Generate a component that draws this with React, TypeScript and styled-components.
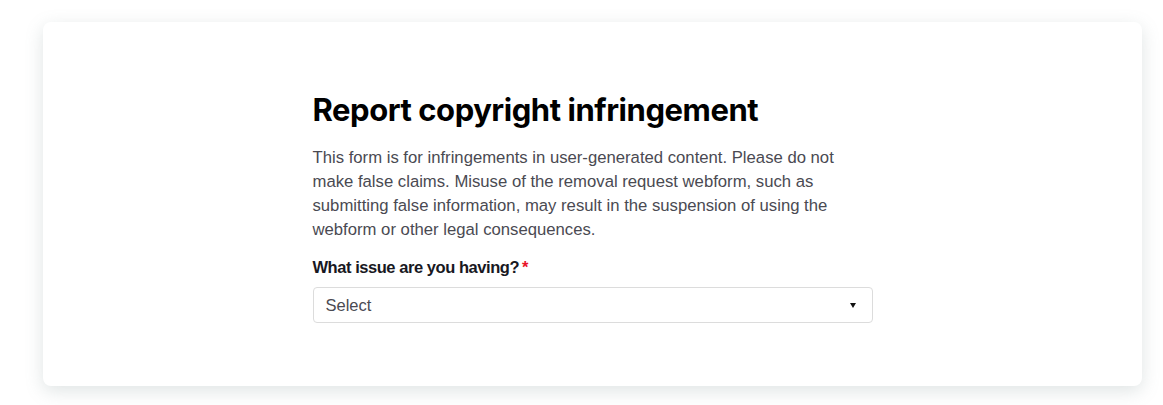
import styled, { createGlobalStyle } from "styled-components";

const GlobalStyle = createGlobalStyle`
    html, body {
        margin: 0;
        padding: 0;
        background: #fff;
    }
    body {
        font-family: "Liberation Sans", Arial, sans-serif;
    }
`;

const SPage = styled.main`
    padding: 22px 21px 19px 43px;
`;

const SCard = styled.section`
    background: #fff;
    border-radius: 8px;
    box-shadow: 0 5px 18px 0 rgba(110, 130, 130, 0.22);
    height: 364px;
    box-sizing: border-box;
    padding-top: 68px;
    display: flex;
    justify-content: center;
`;

const SForm = styled.form`
    width: 560px;
    display: flex;
    flex-direction: column;
`;

const STitle = styled.h1`
    margin: 0 0 16px;
    font-family: Inter, "Liberation Sans", sans-serif;
    font-size: 31px;
    font-weight: 700;
    letter-spacing: -0.45px;
    line-height: 40px;
    color: #000;
`;

const SText = styled.p`
    margin: 0 0 16px;
    width: 540px;
    font-size: 16.7px;
    line-height: 24px;
    color: #4a4a52;
`;

const SLabel = styled.label`
    font-size: 16.5px;
    font-weight: 700;
    letter-spacing: -0.45px;
    color: #181822;
    margin-bottom: 10px;
    span {
        color: #e91429;
        margin-left: 3px;
    }
`;

const SSelect = styled.div`
    height: 36px;
    box-sizing: border-box;
    border: 1px solid #dcdcdc;
    border-radius: 4px;
    padding: 0 16px 0 12px;
    display: flex;
    align-items: center;
    justify-content: space-between;
    font-size: 16.5px;
    color: #4a4a52;
`;

const SArrow = styled.span`
    width: 0;
    height: 0;
    border-left: 3.5px solid transparent;
    border-right: 3.5px solid transparent;
    border-top: 5px solid #111;
`;

export default function App() {
    return (
        <>
            <GlobalStyle />
            <SPage>
                <SCard>
                    <SForm>
                        <STitle>Report copyright infringement</STitle>
                        <SText>
                            This form is for infringements in user-generated content. Please do not
                            make false claims. Misuse of the removal request webform, such as
                            submitting false information, may result in the suspension of using the
                            webform or other legal consequences.
                        </SText>
                        <SLabel>
                            What issue are you having?<span>*</span>
                        </SLabel>
                        <SSelect>
                            Select
                            <SArrow />
                        </SSelect>
                    </SForm>
                </SCard>
            </SPage>
        </>
    );
}
